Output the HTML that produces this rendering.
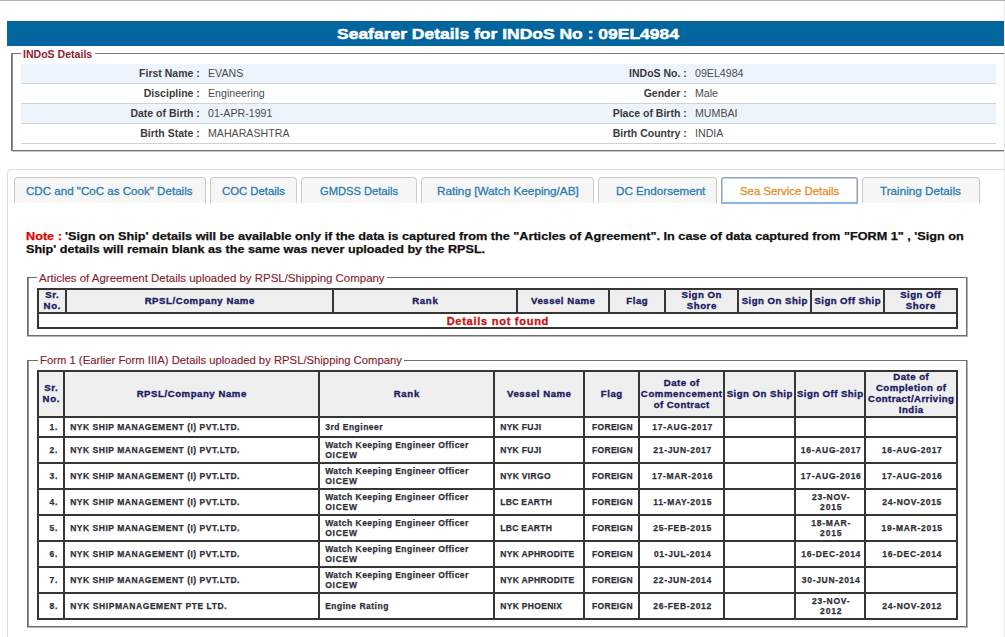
<!DOCTYPE html>
<html><head><meta charset="utf-8"><title>Seafarer Details</title>
<style>
html,body{margin:0;padding:0;background:#fff;}
body{width:1005px;height:637px;overflow:hidden;position:relative;font-family:"Liberation Sans",sans-serif;}
body>div,body>span{position:absolute;}
.t{white-space:nowrap;transform-origin:0 0;display:block;}
</style></head><body>
<div style="left:0px;top:0px;width:1005px;height:1px;background:#b2b2b2"></div>
<div style="left:1004px;top:1px;width:1px;height:636px;background:#ebebeb"></div>
<div style="left:7px;top:21px;width:997px;height:25px;background:#02659d"></div>
<div style="left:7px;top:21px;width:997px;height:1px;background:#0a5d8e"></div>
<span class="t" style="left:337.00px;top:24.97px;font-size:15.5px;line-height:18.60px;font-weight:bold;color:#fff;transform:scaleX(1.1278);-webkit-text-stroke:0.50px #fff;">Seafarer Details for INDoS No : 09EL4984</span>
<div style="left:11px;top:53px;width:1px;height:98px;background:#777"></div>
<div style="left:12px;top:54px;width:1px;height:96px;background:#8c8c8c"></div>
<div style="left:11px;top:53px;width:10px;height:1px;background:#777"></div>
<div style="left:95px;top:53px;width:909px;height:1px;background:#777"></div>
<div style="left:11px;top:150px;width:993px;height:1px;background:#777"></div>
<div style="left:12px;top:151px;width:992px;height:1px;background:#c8c8c8"></div>
<span class="t" style="left:23.40px;top:47.90px;font-size:10.5px;line-height:12.60px;font-weight:bold;color:#8a1e2e;transform:scaleX(1.0051);">INDoS Details</span>
<div style="left:21px;top:64px;width:975px;height:19px;background:#edf4fc"></div>
<div style="left:21px;top:83px;width:975px;height:1px;background:#cfd3d8"></div>
<span class="t" style="left:139.12px;top:67.20px;font-size:10.5px;line-height:12.60px;font-weight:bold;color:#3a3a3a;transform:scaleX(1.0000);">First Name :</span>
<span class="t" style="left:208.00px;top:67.20px;font-size:10.5px;line-height:12.60px;color:#4c4c4c;transform:scaleX(1.0120);">EVANS</span>
<span class="t" style="left:629.05px;top:67.20px;font-size:10.5px;line-height:12.60px;font-weight:bold;color:#3a3a3a;transform:scaleX(1.0000);">INDoS No. :</span>
<span class="t" style="left:694.90px;top:67.20px;font-size:10.5px;line-height:12.60px;color:#4c4c4c;transform:scaleX(1.0120);">09EL4984</span>
<div style="left:21px;top:103px;width:975px;height:1px;background:#cfd3d8"></div>
<span class="t" style="left:143.79px;top:87.20px;font-size:10.5px;line-height:12.60px;font-weight:bold;color:#3a3a3a;transform:scaleX(1.0000);">Discipline :</span>
<span class="t" style="left:208.00px;top:87.20px;font-size:10.5px;line-height:12.60px;color:#4c4c4c;transform:scaleX(1.0120);">Engineering</span>
<span class="t" style="left:643.63px;top:87.20px;font-size:10.5px;line-height:12.60px;font-weight:bold;color:#3a3a3a;transform:scaleX(1.0000);">Gender :</span>
<span class="t" style="left:694.90px;top:87.20px;font-size:10.5px;line-height:12.60px;color:#4c4c4c;transform:scaleX(1.0120);">Male</span>
<div style="left:21px;top:104px;width:975px;height:19px;background:#edf4fc"></div>
<div style="left:21px;top:123px;width:975px;height:1px;background:#cfd3d8"></div>
<span class="t" style="left:130.38px;top:107.20px;font-size:10.5px;line-height:12.60px;font-weight:bold;color:#3a3a3a;transform:scaleX(1.0000);">Date of Birth :</span>
<span class="t" style="left:208.00px;top:107.20px;font-size:10.5px;line-height:12.60px;color:#4c4c4c;transform:scaleX(1.0120);">01-APR-1991</span>
<span class="t" style="left:612.70px;top:107.20px;font-size:10.5px;line-height:12.60px;font-weight:bold;color:#3a3a3a;transform:scaleX(1.0000);">Place of Birth :</span>
<span class="t" style="left:694.90px;top:107.20px;font-size:10.5px;line-height:12.60px;color:#4c4c4c;transform:scaleX(1.0120);">MUMBAI</span>
<div style="left:21px;top:143px;width:975px;height:1px;background:#cfd3d8"></div>
<span class="t" style="left:140.29px;top:127.20px;font-size:10.5px;line-height:12.60px;font-weight:bold;color:#3a3a3a;transform:scaleX(1.0000);">Birth State :</span>
<span class="t" style="left:208.00px;top:127.20px;font-size:10.5px;line-height:12.60px;color:#4c4c4c;transform:scaleX(1.0120);">MAHARASHTRA</span>
<span class="t" style="left:612.72px;top:127.20px;font-size:10.5px;line-height:12.60px;font-weight:bold;color:#3a3a3a;transform:scaleX(1.0000);">Birth Country :</span>
<span class="t" style="left:694.90px;top:127.20px;font-size:10.5px;line-height:12.60px;color:#4c4c4c;transform:scaleX(1.0120);">INDIA</span>
<div style="left:7px;top:169px;width:1010px;height:500px;border:1px solid #dddddd;border-radius:4px;box-sizing:border-box;"></div>
<div style="left:14px;top:177px;width:192px;height:26px;box-sizing:border-box;border:1px solid #cbcbcb;border-bottom:none;border-radius:4px 4px 0 0;background:#f6f6f6"></div>
<span class="t" style="left:26.40px;top:184.40px;font-size:11.6px;line-height:13.92px;color:#2d7cb0;transform:scaleX(0.9986);-webkit-text-stroke:0.3px #2d7cb0;">CDC and &quot;CoC as Cook&quot; Details</span>
<div style="left:210px;top:177px;width:87px;height:26px;box-sizing:border-box;border:1px solid #cbcbcb;border-bottom:none;border-radius:4px 4px 0 0;background:#f6f6f6"></div>
<span class="t" style="left:222.00px;top:184.40px;font-size:11.6px;line-height:13.92px;color:#2d7cb0;transform:scaleX(0.9774);-webkit-text-stroke:0.3px #2d7cb0;">COC Details</span>
<div style="left:301px;top:177px;width:116px;height:26px;box-sizing:border-box;border:1px solid #cbcbcb;border-bottom:none;border-radius:4px 4px 0 0;background:#f6f6f6"></div>
<span class="t" style="left:320.00px;top:184.40px;font-size:11.6px;line-height:13.92px;color:#2d7cb0;transform:scaleX(0.9604);-webkit-text-stroke:0.3px #2d7cb0;">GMDSS Details</span>
<div style="left:421px;top:177px;width:173px;height:26px;box-sizing:border-box;border:1px solid #cbcbcb;border-bottom:none;border-radius:4px 4px 0 0;background:#f6f6f6"></div>
<span class="t" style="left:436.60px;top:184.40px;font-size:11.6px;line-height:13.92px;color:#2d7cb0;transform:scaleX(1.0119);-webkit-text-stroke:0.3px #2d7cb0;">Rating [Watch Keeping/AB]</span>
<div style="left:598px;top:177px;width:119px;height:26px;box-sizing:border-box;border:1px solid #cbcbcb;border-bottom:none;border-radius:4px 4px 0 0;background:#f6f6f6"></div>
<span class="t" style="left:615.60px;top:184.40px;font-size:11.6px;line-height:13.92px;color:#2d7cb0;transform:scaleX(1.0048);-webkit-text-stroke:0.3px #2d7cb0;">DC Endorsement</span>
<div style="left:721px;top:177px;width:137px;height:27px;box-sizing:border-box;border:1px solid #9aa4ae;border-bottom:2px solid #8db4e6;box-shadow:inset 1px 1px 0 #b9d0ee, inset -1px 0 0 #b9d0ee;border-radius:3px 3px 0 0;background:#fff"></div>
<span class="t" style="left:740.00px;top:184.40px;font-size:11.6px;line-height:13.92px;color:#e38f2a;transform:scaleX(0.9810);-webkit-text-stroke:0.3px #e38f2a;">Sea Service Details</span>
<div style="left:862px;top:177px;width:118px;height:26px;box-sizing:border-box;border:1px solid #cbcbcb;border-bottom:none;border-radius:4px 4px 0 0;background:#f6f6f6"></div>
<span class="t" style="left:880.40px;top:184.40px;font-size:11.6px;line-height:13.92px;color:#2d7cb0;transform:scaleX(1.0092);-webkit-text-stroke:0.3px #2d7cb0;">Training Details</span>
<span class="t" style="left:26.00px;top:230.17px;font-size:11.3px;line-height:13.56px;font-weight:bold;color:#e00000;transform:scaleX(1.1219);-webkit-text-stroke:0.25px #e00000;">Note :</span>
<span class="t" style="left:65.44px;top:230.17px;font-size:11.3px;line-height:13.56px;font-weight:bold;color:#111;transform:scaleX(1.1219);-webkit-text-stroke:0.25px #111;">&#x27;Sign on Ship&#x27; details will be available only if the data is captured from the &quot;Articles of Agreement&quot;. In case of data captured from &quot;FORM 1&quot; , &#x27;Sign on</span>
<span class="t" style="left:26.00px;top:242.97px;font-size:11.3px;line-height:13.56px;font-weight:bold;color:#111;transform:scaleX(1.1142);-webkit-text-stroke:0.25px #111;">Ship&#x27; details will remain blank as the same was never uploaded by the RPSL.</span>
<div style="left:27px;top:277px;width:1px;height:60px;background:#6f6f6f"></div>
<div style="left:28px;top:278px;width:1px;height:58px;background:#8c8c8c"></div>
<div style="left:27px;top:277px;width:10px;height:1px;background:#6f6f6f"></div>
<div style="left:386.6px;top:277px;width:581.4px;height:1px;background:#6f6f6f"></div>
<div style="left:27px;top:335px;width:940px;height:1px;background:#6f6f6f"></div>
<div style="left:27px;top:336px;width:941px;height:1px;background:#b5b5b5"></div>
<div style="left:966px;top:277px;width:1px;height:59px;background:#6f6f6f"></div>
<div style="left:967px;top:277px;width:1px;height:60px;background:#b5b5b5"></div>
<span class="t" style="left:39.00px;top:271.75px;font-size:11px;line-height:13.20px;color:#801c2c;transform:scaleX(1.0409);-webkit-text-stroke:0.12px #801c2c;">Articles of Agreement Details uploaded by RPSL/Shipping Company</span>
<div style="left:27px;top:360px;width:1px;height:268px;background:#6f6f6f"></div>
<div style="left:28px;top:361px;width:1px;height:266px;background:#8c8c8c"></div>
<div style="left:27px;top:360px;width:10.600000000000001px;height:1px;background:#6f6f6f"></div>
<div style="left:403.5px;top:360px;width:564.5px;height:1px;background:#6f6f6f"></div>
<div style="left:27px;top:626px;width:940px;height:1px;background:#6f6f6f"></div>
<div style="left:27px;top:627px;width:941px;height:1px;background:#b5b5b5"></div>
<div style="left:966px;top:360px;width:1px;height:267px;background:#6f6f6f"></div>
<div style="left:967px;top:360px;width:1px;height:268px;background:#b5b5b5"></div>
<span class="t" style="left:39.60px;top:353.85px;font-size:11px;line-height:13.20px;color:#801c2c;transform:scaleX(1.0259);-webkit-text-stroke:0.12px #801c2c;">Form 1 (Earlier Form IIIA) Details uploaded by RPSL/Shipping Company</span>
<div style="left:39px;top:290px;width:917px;height:22px;background:#efefef"></div>
<div style="left:39px;top:314px;width:917px;height:13px;background:#fff"></div>
<div style="left:37px;top:288px;width:2px;height:26px;background:#363636"></div>
<div style="left:65px;top:288px;width:2px;height:26px;background:#363636"></div>
<div style="left:332px;top:288px;width:2px;height:26px;background:#363636"></div>
<div style="left:516px;top:288px;width:2px;height:26px;background:#363636"></div>
<div style="left:608px;top:288px;width:2px;height:26px;background:#363636"></div>
<div style="left:664px;top:288px;width:2px;height:26px;background:#363636"></div>
<div style="left:737px;top:288px;width:2px;height:26px;background:#363636"></div>
<div style="left:810px;top:288px;width:2px;height:26px;background:#363636"></div>
<div style="left:883px;top:288px;width:2px;height:26px;background:#363636"></div>
<div style="left:956px;top:288px;width:2px;height:26px;background:#363636"></div>
<div style="left:37px;top:314px;width:2px;height:15px;background:#363636"></div>
<div style="left:956px;top:314px;width:2px;height:15px;background:#363636"></div>
<div style="left:37px;top:288px;width:921px;height:2px;background:#363636"></div>
<div style="left:37px;top:312px;width:921px;height:2px;background:#363636"></div>
<div style="left:37px;top:327px;width:921px;height:2px;background:#363636"></div>
<span class="t" style="left:45.32px;top:289.31px;font-size:9.6px;line-height:11.52px;font-weight:bold;color:#1c1c62;letter-spacing:0.540px;-webkit-text-stroke:0.36px #1c1c62;">Sr.</span>
<span class="t" style="left:43.59px;top:300.31px;font-size:9.6px;line-height:11.52px;font-weight:bold;color:#1c1c62;letter-spacing:0.680px;-webkit-text-stroke:0.36px #1c1c62;">No.</span>
<span class="t" style="left:144.65px;top:294.51px;font-size:9.6px;line-height:11.52px;font-weight:bold;color:#1c1c62;letter-spacing:0.555px;-webkit-text-stroke:0.36px #1c1c62;">RPSL/Company Name</span>
<span class="t" style="left:412.23px;top:294.51px;font-size:9.6px;line-height:11.52px;font-weight:bold;color:#1c1c62;letter-spacing:0.689px;-webkit-text-stroke:0.36px #1c1c62;">Rank</span>
<span class="t" style="left:531.06px;top:294.51px;font-size:9.6px;line-height:11.52px;font-weight:bold;color:#1c1c62;letter-spacing:0.517px;-webkit-text-stroke:0.36px #1c1c62;">Vessel Name</span>
<span class="t" style="left:626.26px;top:294.51px;font-size:9.6px;line-height:11.52px;font-weight:bold;color:#1c1c62;letter-spacing:0.579px;-webkit-text-stroke:0.36px #1c1c62;">Flag</span>
<span class="t" style="left:681.48px;top:289.31px;font-size:9.6px;line-height:11.52px;font-weight:bold;color:#1c1c62;letter-spacing:0.540px;-webkit-text-stroke:0.36px #1c1c62;">Sign On</span>
<span class="t" style="left:686.70px;top:300.31px;font-size:9.6px;line-height:11.52px;font-weight:bold;color:#1c1c62;letter-spacing:0.599px;-webkit-text-stroke:0.36px #1c1c62;">Shore</span>
<span class="t" style="left:741.72px;top:294.51px;font-size:9.6px;line-height:11.52px;font-weight:bold;color:#1c1c62;letter-spacing:0.482px;-webkit-text-stroke:0.36px #1c1c62;">Sign On Ship</span>
<span class="t" style="left:814.43px;top:294.51px;font-size:9.6px;line-height:11.52px;font-weight:bold;color:#1c1c62;letter-spacing:0.446px;-webkit-text-stroke:0.36px #1c1c62;">Sign Off Ship</span>
<span class="t" style="left:900.19px;top:289.31px;font-size:9.6px;line-height:11.52px;font-weight:bold;color:#1c1c62;letter-spacing:0.469px;-webkit-text-stroke:0.36px #1c1c62;">Sign Off</span>
<span class="t" style="left:905.70px;top:300.31px;font-size:9.6px;line-height:11.52px;font-weight:bold;color:#1c1c62;letter-spacing:0.599px;-webkit-text-stroke:0.36px #1c1c62;">Shore</span>
<span class="t" style="left:446.65px;top:314.65px;font-size:11px;line-height:13.20px;font-weight:bold;color:#cc1010;letter-spacing:0.742px;-webkit-text-stroke:0.30px #cc1010;">Details not found</span>
<div style="left:39px;top:372px;width:917px;height:44px;background:#efefef"></div>
<div style="left:37px;top:370px;width:2px;height:250px;background:#363636"></div>
<div style="left:63px;top:370px;width:2px;height:250px;background:#363636"></div>
<div style="left:318px;top:370px;width:2px;height:250px;background:#363636"></div>
<div style="left:493px;top:370px;width:2px;height:250px;background:#363636"></div>
<div style="left:583px;top:370px;width:2px;height:250px;background:#363636"></div>
<div style="left:638px;top:370px;width:2px;height:250px;background:#363636"></div>
<div style="left:723px;top:370px;width:2px;height:250px;background:#363636"></div>
<div style="left:794px;top:370px;width:2px;height:250px;background:#363636"></div>
<div style="left:864px;top:370px;width:2px;height:250px;background:#363636"></div>
<div style="left:956px;top:370px;width:2px;height:250px;background:#363636"></div>
<div style="left:37px;top:370px;width:921px;height:2px;background:#363636"></div>
<div style="left:37px;top:416px;width:921px;height:2px;background:#363636"></div>
<div style="left:37px;top:436px;width:921px;height:2px;background:#363636"></div>
<div style="left:37px;top:462px;width:921px;height:2px;background:#363636"></div>
<div style="left:37px;top:488px;width:921px;height:2px;background:#363636"></div>
<div style="left:37px;top:514px;width:921px;height:2px;background:#363636"></div>
<div style="left:37px;top:540px;width:921px;height:2px;background:#363636"></div>
<div style="left:37px;top:566px;width:921px;height:2px;background:#363636"></div>
<div style="left:37px;top:592px;width:921px;height:2px;background:#363636"></div>
<div style="left:37px;top:618px;width:921px;height:2px;background:#363636"></div>
<span class="t" style="left:44.32px;top:382.31px;font-size:9.6px;line-height:11.52px;font-weight:bold;color:#1c1c62;letter-spacing:0.540px;-webkit-text-stroke:0.36px #1c1c62;">Sr.</span>
<span class="t" style="left:42.59px;top:393.31px;font-size:9.6px;line-height:11.52px;font-weight:bold;color:#1c1c62;letter-spacing:0.680px;-webkit-text-stroke:0.36px #1c1c62;">No.</span>
<span class="t" style="left:136.65px;top:387.81px;font-size:9.6px;line-height:11.52px;font-weight:bold;color:#1c1c62;letter-spacing:0.555px;-webkit-text-stroke:0.36px #1c1c62;">RPSL/Company Name</span>
<span class="t" style="left:393.73px;top:387.81px;font-size:9.6px;line-height:11.52px;font-weight:bold;color:#1c1c62;letter-spacing:0.689px;-webkit-text-stroke:0.36px #1c1c62;">Rank</span>
<span class="t" style="left:507.06px;top:387.81px;font-size:9.6px;line-height:11.52px;font-weight:bold;color:#1c1c62;letter-spacing:0.517px;-webkit-text-stroke:0.36px #1c1c62;">Vessel Name</span>
<span class="t" style="left:600.76px;top:387.81px;font-size:9.6px;line-height:11.52px;font-weight:bold;color:#1c1c62;letter-spacing:0.579px;-webkit-text-stroke:0.36px #1c1c62;">Flag</span>
<span class="t" style="left:663.80px;top:376.81px;font-size:9.6px;line-height:11.52px;font-weight:bold;color:#1c1c62;letter-spacing:0.477px;-webkit-text-stroke:0.36px #1c1c62;">Date of</span>
<span class="t" style="left:640.87px;top:387.81px;font-size:9.6px;line-height:11.52px;font-weight:bold;color:#1c1c62;letter-spacing:0.597px;-webkit-text-stroke:0.36px #1c1c62;">Commencement</span>
<span class="t" style="left:653.65px;top:398.81px;font-size:9.6px;line-height:11.52px;font-weight:bold;color:#1c1c62;letter-spacing:0.451px;-webkit-text-stroke:0.36px #1c1c62;">of Contract</span>
<span class="t" style="left:726.72px;top:387.81px;font-size:9.6px;line-height:11.52px;font-weight:bold;color:#1c1c62;letter-spacing:0.482px;-webkit-text-stroke:0.36px #1c1c62;">Sign On Ship</span>
<span class="t" style="left:796.93px;top:387.81px;font-size:9.6px;line-height:11.52px;font-weight:bold;color:#1c1c62;letter-spacing:0.446px;-webkit-text-stroke:0.36px #1c1c62;">Sign Off Ship</span>
<span class="t" style="left:893.30px;top:371.31px;font-size:9.6px;line-height:11.52px;font-weight:bold;color:#1c1c62;letter-spacing:0.477px;-webkit-text-stroke:0.36px #1c1c62;">Date of</span>
<span class="t" style="left:875.90px;top:382.31px;font-size:9.6px;line-height:11.52px;font-weight:bold;color:#1c1c62;letter-spacing:0.473px;-webkit-text-stroke:0.36px #1c1c62;">Completion of</span>
<span class="t" style="left:868.05px;top:393.31px;font-size:9.6px;line-height:11.52px;font-weight:bold;color:#1c1c62;letter-spacing:0.434px;-webkit-text-stroke:0.36px #1c1c62;">Contract/Arriving</span>
<span class="t" style="left:898.81px;top:404.31px;font-size:9.6px;line-height:11.52px;font-weight:bold;color:#1c1c62;letter-spacing:0.493px;-webkit-text-stroke:0.36px #1c1c62;">India</span>
<span class="t" style="left:49.57px;top:422.11px;font-size:8.5px;line-height:10.20px;font-weight:bold;color:#2f2f3a;letter-spacing:0.744px;-webkit-text-stroke:0.25px #2f2f3a;">1.</span>
<span class="t" style="left:70.20px;top:422.11px;font-size:8.5px;line-height:10.20px;font-weight:bold;color:#2f2f3a;letter-spacing:0.519px;-webkit-text-stroke:0.25px #2f2f3a;">NYK SHIP MANAGEMENT (I) PVT.LTD.</span>
<span class="t" style="left:325.20px;top:422.11px;font-size:8.5px;line-height:10.20px;font-weight:bold;color:#2f2f3a;letter-spacing:0.496px;-webkit-text-stroke:0.25px #2f2f3a;">3rd Engineer</span>
<span class="t" style="left:500.20px;top:422.11px;font-size:8.5px;line-height:10.20px;font-weight:bold;color:#2f2f3a;letter-spacing:0.304px;-webkit-text-stroke:0.25px #2f2f3a;">NYK FUJI</span>
<span class="t" style="left:591.97px;top:422.11px;font-size:8.5px;line-height:10.20px;font-weight:bold;color:#2f2f3a;letter-spacing:0.323px;-webkit-text-stroke:0.25px #2f2f3a;">FOREIGN</span>
<span class="t" style="left:652.27px;top:422.11px;font-size:8.5px;line-height:10.20px;font-weight:bold;color:#2f2f3a;letter-spacing:0.714px;-webkit-text-stroke:0.25px #2f2f3a;">17-AUG-2017</span>
<span class="t" style="left:49.57px;top:445.11px;font-size:8.5px;line-height:10.20px;font-weight:bold;color:#2f2f3a;letter-spacing:0.744px;-webkit-text-stroke:0.25px #2f2f3a;">2.</span>
<span class="t" style="left:70.20px;top:445.11px;font-size:8.5px;line-height:10.20px;font-weight:bold;color:#2f2f3a;letter-spacing:0.519px;-webkit-text-stroke:0.25px #2f2f3a;">NYK SHIP MANAGEMENT (I) PVT.LTD.</span>
<span class="t" style="left:325.20px;top:440.11px;font-size:8.5px;line-height:10.20px;font-weight:bold;color:#2f2f3a;letter-spacing:0.469px;-webkit-text-stroke:0.25px #2f2f3a;">Watch Keeping Engineer Officer</span>
<span class="t" style="left:325.20px;top:450.21px;font-size:8.5px;line-height:10.20px;font-weight:bold;color:#2f2f3a;letter-spacing:0.756px;-webkit-text-stroke:0.25px #2f2f3a;">OICEW</span>
<span class="t" style="left:500.20px;top:445.11px;font-size:8.5px;line-height:10.20px;font-weight:bold;color:#2f2f3a;letter-spacing:0.304px;-webkit-text-stroke:0.25px #2f2f3a;">NYK FUJI</span>
<span class="t" style="left:591.97px;top:445.11px;font-size:8.5px;line-height:10.20px;font-weight:bold;color:#2f2f3a;letter-spacing:0.323px;-webkit-text-stroke:0.25px #2f2f3a;">FOREIGN</span>
<span class="t" style="left:653.34px;top:445.11px;font-size:8.5px;line-height:10.20px;font-weight:bold;color:#2f2f3a;letter-spacing:0.689px;-webkit-text-stroke:0.25px #2f2f3a;">21-JUN-2017</span>
<span class="t" style="left:800.77px;top:445.11px;font-size:8.5px;line-height:10.20px;font-weight:bold;color:#2f2f3a;letter-spacing:0.714px;-webkit-text-stroke:0.25px #2f2f3a;">16-AUG-2017</span>
<span class="t" style="left:881.77px;top:445.11px;font-size:8.5px;line-height:10.20px;font-weight:bold;color:#2f2f3a;letter-spacing:0.714px;-webkit-text-stroke:0.25px #2f2f3a;">16-AUG-2017</span>
<span class="t" style="left:49.57px;top:471.11px;font-size:8.5px;line-height:10.20px;font-weight:bold;color:#2f2f3a;letter-spacing:0.744px;-webkit-text-stroke:0.25px #2f2f3a;">3.</span>
<span class="t" style="left:70.20px;top:471.11px;font-size:8.5px;line-height:10.20px;font-weight:bold;color:#2f2f3a;letter-spacing:0.519px;-webkit-text-stroke:0.25px #2f2f3a;">NYK SHIP MANAGEMENT (I) PVT.LTD.</span>
<span class="t" style="left:325.20px;top:466.11px;font-size:8.5px;line-height:10.20px;font-weight:bold;color:#2f2f3a;letter-spacing:0.469px;-webkit-text-stroke:0.25px #2f2f3a;">Watch Keeping Engineer Officer</span>
<span class="t" style="left:325.20px;top:476.21px;font-size:8.5px;line-height:10.20px;font-weight:bold;color:#2f2f3a;letter-spacing:0.756px;-webkit-text-stroke:0.25px #2f2f3a;">OICEW</span>
<span class="t" style="left:500.20px;top:471.11px;font-size:8.5px;line-height:10.20px;font-weight:bold;color:#2f2f3a;letter-spacing:0.328px;-webkit-text-stroke:0.25px #2f2f3a;">NYK VIRGO</span>
<span class="t" style="left:591.97px;top:471.11px;font-size:8.5px;line-height:10.20px;font-weight:bold;color:#2f2f3a;letter-spacing:0.323px;-webkit-text-stroke:0.25px #2f2f3a;">FOREIGN</span>
<span class="t" style="left:652.00px;top:471.11px;font-size:8.5px;line-height:10.20px;font-weight:bold;color:#2f2f3a;letter-spacing:0.721px;-webkit-text-stroke:0.25px #2f2f3a;">17-MAR-2016</span>
<span class="t" style="left:800.77px;top:471.11px;font-size:8.5px;line-height:10.20px;font-weight:bold;color:#2f2f3a;letter-spacing:0.714px;-webkit-text-stroke:0.25px #2f2f3a;">17-AUG-2016</span>
<span class="t" style="left:881.77px;top:471.11px;font-size:8.5px;line-height:10.20px;font-weight:bold;color:#2f2f3a;letter-spacing:0.714px;-webkit-text-stroke:0.25px #2f2f3a;">17-AUG-2016</span>
<span class="t" style="left:49.57px;top:497.11px;font-size:8.5px;line-height:10.20px;font-weight:bold;color:#2f2f3a;letter-spacing:0.744px;-webkit-text-stroke:0.25px #2f2f3a;">4.</span>
<span class="t" style="left:70.20px;top:497.11px;font-size:8.5px;line-height:10.20px;font-weight:bold;color:#2f2f3a;letter-spacing:0.519px;-webkit-text-stroke:0.25px #2f2f3a;">NYK SHIP MANAGEMENT (I) PVT.LTD.</span>
<span class="t" style="left:325.20px;top:492.11px;font-size:8.5px;line-height:10.20px;font-weight:bold;color:#2f2f3a;letter-spacing:0.469px;-webkit-text-stroke:0.25px #2f2f3a;">Watch Keeping Engineer Officer</span>
<span class="t" style="left:325.20px;top:502.21px;font-size:8.5px;line-height:10.20px;font-weight:bold;color:#2f2f3a;letter-spacing:0.756px;-webkit-text-stroke:0.25px #2f2f3a;">OICEW</span>
<span class="t" style="left:500.20px;top:497.11px;font-size:8.5px;line-height:10.20px;font-weight:bold;color:#2f2f3a;letter-spacing:0.338px;-webkit-text-stroke:0.25px #2f2f3a;">LBC EARTH</span>
<span class="t" style="left:591.97px;top:497.11px;font-size:8.5px;line-height:10.20px;font-weight:bold;color:#2f2f3a;letter-spacing:0.323px;-webkit-text-stroke:0.25px #2f2f3a;">FOREIGN</span>
<span class="t" style="left:653.25px;top:497.11px;font-size:8.5px;line-height:10.20px;font-weight:bold;color:#2f2f3a;letter-spacing:0.691px;-webkit-text-stroke:0.25px #2f2f3a;">11-MAY-2015</span>
<span class="t" style="left:812.03px;top:492.11px;font-size:8.5px;line-height:10.20px;font-weight:bold;color:#2f2f3a;letter-spacing:0.744px;-webkit-text-stroke:0.25px #2f2f3a;">23-NOV-</span>
<span class="t" style="left:820.07px;top:502.21px;font-size:8.5px;line-height:10.20px;font-weight:bold;color:#2f2f3a;letter-spacing:0.851px;-webkit-text-stroke:0.25px #2f2f3a;">2015</span>
<span class="t" style="left:882.30px;top:497.11px;font-size:8.5px;line-height:10.20px;font-weight:bold;color:#2f2f3a;letter-spacing:0.702px;-webkit-text-stroke:0.25px #2f2f3a;">24-NOV-2015</span>
<span class="t" style="left:49.57px;top:523.11px;font-size:8.5px;line-height:10.20px;font-weight:bold;color:#2f2f3a;letter-spacing:0.744px;-webkit-text-stroke:0.25px #2f2f3a;">5.</span>
<span class="t" style="left:70.20px;top:523.11px;font-size:8.5px;line-height:10.20px;font-weight:bold;color:#2f2f3a;letter-spacing:0.519px;-webkit-text-stroke:0.25px #2f2f3a;">NYK SHIP MANAGEMENT (I) PVT.LTD.</span>
<span class="t" style="left:325.20px;top:518.11px;font-size:8.5px;line-height:10.20px;font-weight:bold;color:#2f2f3a;letter-spacing:0.469px;-webkit-text-stroke:0.25px #2f2f3a;">Watch Keeping Engineer Officer</span>
<span class="t" style="left:325.20px;top:528.21px;font-size:8.5px;line-height:10.20px;font-weight:bold;color:#2f2f3a;letter-spacing:0.756px;-webkit-text-stroke:0.25px #2f2f3a;">OICEW</span>
<span class="t" style="left:500.20px;top:523.11px;font-size:8.5px;line-height:10.20px;font-weight:bold;color:#2f2f3a;letter-spacing:0.338px;-webkit-text-stroke:0.25px #2f2f3a;">LBC EARTH</span>
<span class="t" style="left:591.97px;top:523.11px;font-size:8.5px;line-height:10.20px;font-weight:bold;color:#2f2f3a;letter-spacing:0.323px;-webkit-text-stroke:0.25px #2f2f3a;">FOREIGN</span>
<span class="t" style="left:653.34px;top:523.11px;font-size:8.5px;line-height:10.20px;font-weight:bold;color:#2f2f3a;letter-spacing:0.689px;-webkit-text-stroke:0.25px #2f2f3a;">25-FEB-2015</span>
<span class="t" style="left:811.24px;top:518.11px;font-size:8.5px;line-height:10.20px;font-weight:bold;color:#2f2f3a;letter-spacing:0.776px;-webkit-text-stroke:0.25px #2f2f3a;">18-MAR-</span>
<span class="t" style="left:820.07px;top:528.21px;font-size:8.5px;line-height:10.20px;font-weight:bold;color:#2f2f3a;letter-spacing:0.851px;-webkit-text-stroke:0.25px #2f2f3a;">2015</span>
<span class="t" style="left:881.50px;top:523.11px;font-size:8.5px;line-height:10.20px;font-weight:bold;color:#2f2f3a;letter-spacing:0.721px;-webkit-text-stroke:0.25px #2f2f3a;">19-MAR-2015</span>
<span class="t" style="left:49.57px;top:549.11px;font-size:8.5px;line-height:10.20px;font-weight:bold;color:#2f2f3a;letter-spacing:0.744px;-webkit-text-stroke:0.25px #2f2f3a;">6.</span>
<span class="t" style="left:70.20px;top:549.11px;font-size:8.5px;line-height:10.20px;font-weight:bold;color:#2f2f3a;letter-spacing:0.519px;-webkit-text-stroke:0.25px #2f2f3a;">NYK SHIP MANAGEMENT (I) PVT.LTD.</span>
<span class="t" style="left:325.20px;top:544.11px;font-size:8.5px;line-height:10.20px;font-weight:bold;color:#2f2f3a;letter-spacing:0.469px;-webkit-text-stroke:0.25px #2f2f3a;">Watch Keeping Engineer Officer</span>
<span class="t" style="left:325.20px;top:554.21px;font-size:8.5px;line-height:10.20px;font-weight:bold;color:#2f2f3a;letter-spacing:0.756px;-webkit-text-stroke:0.25px #2f2f3a;">OICEW</span>
<span class="t" style="left:500.20px;top:549.11px;font-size:8.5px;line-height:10.20px;font-weight:bold;color:#2f2f3a;letter-spacing:0.321px;-webkit-text-stroke:0.25px #2f2f3a;">NYK APHRODITE</span>
<span class="t" style="left:591.97px;top:549.11px;font-size:8.5px;line-height:10.20px;font-weight:bold;color:#2f2f3a;letter-spacing:0.323px;-webkit-text-stroke:0.25px #2f2f3a;">FOREIGN</span>
<span class="t" style="left:653.88px;top:549.11px;font-size:8.5px;line-height:10.20px;font-weight:bold;color:#2f2f3a;letter-spacing:0.676px;-webkit-text-stroke:0.25px #2f2f3a;">01-JUL-2014</span>
<span class="t" style="left:801.31px;top:549.11px;font-size:8.5px;line-height:10.20px;font-weight:bold;color:#2f2f3a;letter-spacing:0.702px;-webkit-text-stroke:0.25px #2f2f3a;">16-DEC-2014</span>
<span class="t" style="left:882.31px;top:549.11px;font-size:8.5px;line-height:10.20px;font-weight:bold;color:#2f2f3a;letter-spacing:0.702px;-webkit-text-stroke:0.25px #2f2f3a;">16-DEC-2014</span>
<span class="t" style="left:49.57px;top:575.11px;font-size:8.5px;line-height:10.20px;font-weight:bold;color:#2f2f3a;letter-spacing:0.744px;-webkit-text-stroke:0.25px #2f2f3a;">7.</span>
<span class="t" style="left:70.20px;top:575.11px;font-size:8.5px;line-height:10.20px;font-weight:bold;color:#2f2f3a;letter-spacing:0.519px;-webkit-text-stroke:0.25px #2f2f3a;">NYK SHIP MANAGEMENT (I) PVT.LTD.</span>
<span class="t" style="left:325.20px;top:570.11px;font-size:8.5px;line-height:10.20px;font-weight:bold;color:#2f2f3a;letter-spacing:0.469px;-webkit-text-stroke:0.25px #2f2f3a;">Watch Keeping Engineer Officer</span>
<span class="t" style="left:325.20px;top:580.21px;font-size:8.5px;line-height:10.20px;font-weight:bold;color:#2f2f3a;letter-spacing:0.756px;-webkit-text-stroke:0.25px #2f2f3a;">OICEW</span>
<span class="t" style="left:500.20px;top:575.11px;font-size:8.5px;line-height:10.20px;font-weight:bold;color:#2f2f3a;letter-spacing:0.321px;-webkit-text-stroke:0.25px #2f2f3a;">NYK APHRODITE</span>
<span class="t" style="left:591.97px;top:575.11px;font-size:8.5px;line-height:10.20px;font-weight:bold;color:#2f2f3a;letter-spacing:0.323px;-webkit-text-stroke:0.25px #2f2f3a;">FOREIGN</span>
<span class="t" style="left:653.34px;top:575.11px;font-size:8.5px;line-height:10.20px;font-weight:bold;color:#2f2f3a;letter-spacing:0.689px;-webkit-text-stroke:0.25px #2f2f3a;">22-JUN-2014</span>
<span class="t" style="left:801.84px;top:575.11px;font-size:8.5px;line-height:10.20px;font-weight:bold;color:#2f2f3a;letter-spacing:0.689px;-webkit-text-stroke:0.25px #2f2f3a;">30-JUN-2014</span>
<span class="t" style="left:49.57px;top:601.11px;font-size:8.5px;line-height:10.20px;font-weight:bold;color:#2f2f3a;letter-spacing:0.744px;-webkit-text-stroke:0.25px #2f2f3a;">8.</span>
<span class="t" style="left:70.20px;top:601.11px;font-size:8.5px;line-height:10.20px;font-weight:bold;color:#2f2f3a;letter-spacing:0.572px;-webkit-text-stroke:0.25px #2f2f3a;">NYK SHIPMANAGEMENT PTE LTD.</span>
<span class="t" style="left:325.20px;top:601.11px;font-size:8.5px;line-height:10.20px;font-weight:bold;color:#2f2f3a;letter-spacing:0.500px;-webkit-text-stroke:0.25px #2f2f3a;">Engine Rating</span>
<span class="t" style="left:500.20px;top:601.11px;font-size:8.5px;line-height:10.20px;font-weight:bold;color:#2f2f3a;letter-spacing:0.322px;-webkit-text-stroke:0.25px #2f2f3a;">NYK PHOENIX</span>
<span class="t" style="left:591.97px;top:601.11px;font-size:8.5px;line-height:10.20px;font-weight:bold;color:#2f2f3a;letter-spacing:0.323px;-webkit-text-stroke:0.25px #2f2f3a;">FOREIGN</span>
<span class="t" style="left:653.34px;top:601.11px;font-size:8.5px;line-height:10.20px;font-weight:bold;color:#2f2f3a;letter-spacing:0.689px;-webkit-text-stroke:0.25px #2f2f3a;">26-FEB-2012</span>
<span class="t" style="left:812.03px;top:596.11px;font-size:8.5px;line-height:10.20px;font-weight:bold;color:#2f2f3a;letter-spacing:0.744px;-webkit-text-stroke:0.25px #2f2f3a;">23-NOV-</span>
<span class="t" style="left:820.07px;top:606.21px;font-size:8.5px;line-height:10.20px;font-weight:bold;color:#2f2f3a;letter-spacing:0.851px;-webkit-text-stroke:0.25px #2f2f3a;">2012</span>
<span class="t" style="left:882.30px;top:601.11px;font-size:8.5px;line-height:10.20px;font-weight:bold;color:#2f2f3a;letter-spacing:0.702px;-webkit-text-stroke:0.25px #2f2f3a;">24-NOV-2012</span>
</body></html>
